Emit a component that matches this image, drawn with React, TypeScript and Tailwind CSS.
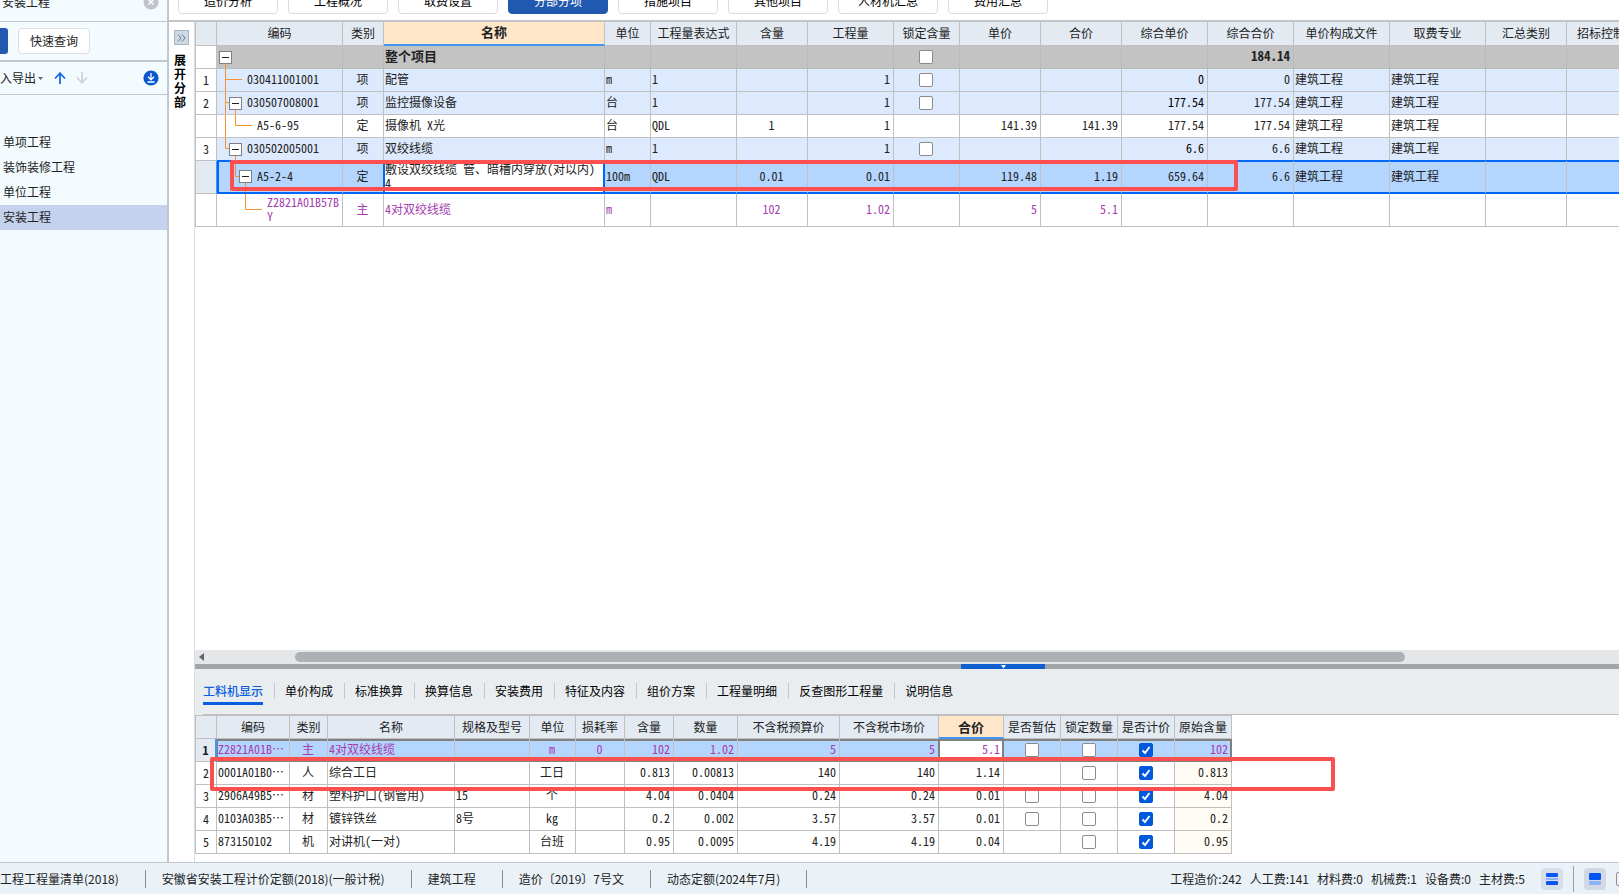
/**
 * App.tsx — Budget editor: project sidebar, bill-of-quantities grid,
 * resource breakdown panel and status bar.
 */
import { Fragment, useState } from "react";
import type { ReactNode } from "react";
import clsx from "clsx";

type Align = "left" | "center" | "right";

interface Column {
  title: string;
  width: string;
  align: Align;
}

interface BillRow {
  no: string;
  kind: "root" | "item" | "quota" | "selected" | "material";
  level: number;
  expander: boolean;
  lines: string;
  lock: boolean;
  code: string;
  cells: string[];
}

interface ResourceRow {
  cells: string[];
  estimate: boolean;
  original: string;
}

const ALIGN: Record<Align, string> = {
  left: "text-left pl-px",
  center: "text-center pr-px",
  right: "text-right pr-[3px]",
};

const INDENT = ["pl-[2px]", "pl-[12px]", "pl-[22px]", "pl-[32px]"];

const PAGE_TABS = ["造价分析", "工程概况", "取费设置", "分部分项", "措施项目", "其他项目", "人材机汇总", "费用汇总"];

const PROJECTS = ["单项工程", "装饰装修工程", "单位工程", "安装工程"];

const DETAIL_TABS = [
  "工料机显示",
  "单价构成",
  "标准换算",
  "换算信息",
  "安装费用",
  "特征及内容",
  "组价方案",
  "工程量明细",
  "反查图形工程量",
  "说明信息",
];

const BILL_COLUMNS: Column[] = [
  { title: "类别", width: "w-[41px]", align: "center" },
  { title: "名称", width: "w-[221px]", align: "left" },
  { title: "单位", width: "w-[46px]", align: "left" },
  { title: "工程量表达式", width: "w-[86px]", align: "left" },
  { title: "含量", width: "w-[71px]", align: "center" },
  { title: "工程量", width: "w-[86px]", align: "right" },
  { title: "锁定含量", width: "w-[66px]", align: "center" },
  { title: "单价", width: "w-[81px]", align: "right" },
  { title: "合价", width: "w-[81px]", align: "right" },
  { title: "综合单价", width: "w-[86px]", align: "right" },
  { title: "综合合价", width: "w-[86px]", align: "right" },
  { title: "单价构成文件", width: "w-[96px]", align: "left" },
  { title: "取费专业", width: "w-[96px]", align: "left" },
  { title: "汇总类别", width: "w-[81px]", align: "left" },
  { title: "招标控制价", width: "w-[81px]", align: "left" },
];

// "lines" is the connector drawing for the row, in cell coordinates
const BILL_ROWS: BillRow[] = [
  {
    no: "", kind: "root", level: 0, expander: true, lock: true, code: "",
    lines: "M8.5 17V23",
    cells: ["", "整个项目", "", "", "", "", "", "", "", "", "184.14", "", "", "", ""],
  },
  {
    no: "1", kind: "item", level: 1, expander: false, lock: true, code: "030411001001",
    lines: "M8.5 0V23M8.5 10.5H25",
    cells: ["项", "配管", "m", "1", "", "1", "", "", "", "0", "0", "建筑工程", "建筑工程", "", ""],
  },
  {
    no: "2", kind: "item", level: 1, expander: true, lock: true, code: "030507008001",
    lines: "M8.5 0V23M8.5 10.5H12M18.5 17V23",
    cells: ["项", "监控摄像设备", "台", "1", "", "1", "", "", "", "177.54", "177.54", "建筑工程", "建筑工程", "", ""],
  },
  {
    no: "", kind: "quota", level: 2, expander: false, lock: false, code: "A5-6-95",
    lines: "M8.5 0V23M18.5 0V10.5H35",
    cells: ["定", "摄像机 X光", "台", "QDL", "1", "1", "", "141.39", "141.39", "177.54", "177.54", "建筑工程", "建筑工程", "", ""],
  },
  {
    no: "3", kind: "item", level: 1, expander: true, lock: true, code: "030502005001",
    lines: "M8.5 0V10.5H12M18.5 17V23",
    cells: ["项", "双绞线缆", "m", "1", "", "1", "", "", "", "6.6", "6.6", "建筑工程", "建筑工程", "", ""],
  },
  {
    no: "", kind: "selected", level: 2, expander: true, lock: false, code: "A5-2-4",
    lines: "M18.5 0V15.5H22M28.5 22V33",
    cells: ["定", "敷设双绞线缆 管、暗槽内穿放(对以内) 4", "100m", "QDL", "0.01", "0.01", "", "119.48", "1.19", "659.64", "6.6", "建筑工程", "建筑工程", "", ""],
  },
  {
    no: "", kind: "material", level: 3, expander: false, lock: false, code: "Z2821A01B57BY",
    lines: "M28.5 0V15.5H45",
    cells: ["主", "4对双绞线缆", "m", "", "102", "1.02", "", "5", "5.1", "", "", "", "", "", ""],
  },
];

const RESOURCE_COLUMNS: Column[] = [
  { title: "编码", width: "w-[73px]", align: "left" },
  { title: "类别", width: "w-[38px]", align: "center" },
  { title: "名称", width: "w-[127px]", align: "left" },
  { title: "规格及型号", width: "w-[75px]", align: "left" },
  { title: "单位", width: "w-[46px]", align: "center" },
  { title: "损耗率", width: "w-[49px]", align: "center" },
  { title: "含量", width: "w-[49px]", align: "right" },
  { title: "数量", width: "w-[64px]", align: "right" },
  { title: "不含税预算价", width: "w-[102px]", align: "right" },
  { title: "不含税市场价", width: "w-[99px]", align: "right" },
  { title: "合价", width: "w-[65px]", align: "right" },
  { title: "是否暂估", width: "w-[57px]", align: "center" },
  { title: "锁定数量", width: "w-[57px]", align: "center" },
  { title: "是否计价", width: "w-[57px]", align: "center" },
  { title: "原始含量", width: "w-[57px]", align: "right" },
];

const RESOURCE_ROWS: ResourceRow[] = [
  { cells: ["Z2821A01B…", "主", "4对双绞线缆", "", "m", "0", "102", "1.02", "5", "5", "5.1"], estimate: true, original: "102" },
  { cells: ["0001A01B0…", "人", "综合工日", "", "工日", "", "0.813", "0.00813", "140", "140", "1.14"], estimate: false, original: "0.813" },
  { cells: ["2906A49B5…", "材", "塑料护口(钢管用)", "15", "个", "", "4.04", "0.0404", "0.24", "0.24", "0.01"], estimate: true, original: "4.04" },
  { cells: ["0103A03B5…", "材", "镀锌铁丝", "8号", "kg", "", "0.2", "0.002", "3.57", "3.57", "0.01"], estimate: true, original: "0.2" },
  { cells: ["873150102", "机", "对讲机(一对)", "", "台班", "", "0.95", "0.0095", "4.19", "4.19", "0.04"], estimate: false, original: "0.95" },
];

const STATUS_INFO = [
  "工程工程量清单(2018)",
  "安徽省安装工程计价定额(2018)(一般计税)",
  "建筑工程",
  "造价〔2019〕7号文",
  "动态定额(2024年7月)",
];

const STATUS_TOTALS = ["工程造价:242", "人工费:141", "材料费:0", "机械费:1", "设备费:0", "主材费:5"];

function CheckBox({ label, checked = false }: { label: string; checked?: boolean }) {
  const [on, setOn] = useState(checked);
  return (
    <span className="relative mx-auto block size-[14px]">
      <input
        type="checkbox"
        aria-label={label}
        checked={on}
        onChange={() => setOn(!on)}
        className="block size-[14px] appearance-none rounded-[2px] border border-[#8c8c8c] bg-white checked:border-[#0058dd] checked:bg-[#0058dd]"
      />
      {on && (
        <svg viewBox="0 0 14 14" className="pointer-events-none absolute inset-0 size-[14px]">
          <path d="M3.5 7.5L6 10L10.5 4" fill="none" stroke="#fff" strokeWidth="2" />
        </svg>
      )}
    </span>
  );
}

function HeadCell({ children, active = false }: { children?: ReactNode; active?: boolean }) {
  return (
    <th
      className={clsx(
        "overflow-hidden border-r border-r-[#c0c0c0] p-0",
        active
          ? "border-b-2 border-b-[#3f96f8] bg-[#ffe6c8] text-[13px] font-bold"
          : "border-b border-b-[#c0c0c0] bg-[#e3eaf2] font-normal"
      )}
    >
      {children}
    </th>
  );
}

function TreeCell({ row }: { row: BillRow }) {
  return (
    <div className={clsx("flex items-center gap-[5px]", INDENT[row.level])}>
      <svg className="absolute top-0 left-0 h-full w-12" fill="none" stroke="#f7922d">
        <path d={row.lines} />
      </svg>
      {row.expander ? (
        <button
          aria-label="折叠"
          className="relative flex size-[13px] shrink-0 items-center justify-center border border-[#808080] bg-white"
        >
          <span className="h-px w-[7px] bg-[#222]" />
        </button>
      ) : (
        <span className="w-[13px] shrink-0" />
      )}
      <span className="w-[72px] pb-[2px] text-left break-all whitespace-normal">{row.code}</span>
    </div>
  );
}

const ROW_BG: Record<BillRow["kind"], string> = {
  root: "h-[23px] bg-[#c3c3c3] border-b-[#bababa] border-r-[#bababa] border-b",
  item: "h-[23px] bg-[#dde9fd] border-b-[#c0c0c0] border-r-[#c0c0c0] border-b",
  quota: "h-[23px] bg-white border-b-[#c0c0c0] border-r-[#c0c0c0] border-b",
  selected: "h-[33px] border-b-2 border-b-[#0067f8]",
  material: "h-[33px] bg-white border-b-[#c0c0c0] border-r-[#c0c0c0] border-b text-[#a53cb0]",
};

// Frame pieces of the selected row; plain cells only carry the top edge
const SELECTED_FIRST =
  "bg-[#b3d5fe] border-r-[#c0c0c0] shadow-[0_-1px_0_#0067f8,inset_2px_1px_0_#0067f8]";
const SELECTED_EDIT =
  "bg-white border-r-[#0067f8] whitespace-normal shadow-[0_-1px_0_#0067f8,inset_1px_1px_0_#0067f8,inset_-1px_0_0_#0067f8]";
const SELECTED_PLAIN =
  "bg-[#b3d5fe] border-r-[#c0c0c0] shadow-[0_-1px_0_#0067f8,inset_0_1px_0_#0067f8]";
const SELECTED_BEFORE_EDIT =
  "bg-[#b3d5fe] border-r-[#0067f8] shadow-[0_-1px_0_#0067f8,inset_0_1px_0_#0067f8]";

function BillGrid() {
  return (
    <table className="w-0 table-fixed border-separate border-spacing-0 border-l border-[#c0c0c0] text-[12px] leading-[14px] whitespace-nowrap">
      <colgroup>
        <col className="w-[21px]" />
        <col className="w-[126px]" />
        {BILL_COLUMNS.map((c) => (
          <col key={c.title} className={c.width} />
        ))}
      </colgroup>
      <thead className="[&_th]:pb-[2px]">
        <tr className="h-[24px]">
          <HeadCell />
          <HeadCell>编码</HeadCell>
          {BILL_COLUMNS.map((c) => (
            <HeadCell key={c.title} active={c.title === "名称"}>
              {c.title}
            </HeadCell>
          ))}
        </tr>
      </thead>
      <tbody>
        {BILL_ROWS.map((row, i) => {
          const selected = row.kind === "selected";
          return (
            <tr key={i}>
              <td
                className={clsx(
                  "border-r border-b p-0 text-center",
                  selected ? "border-r-[#3f96f8] border-b-[#c0c0c0] bg-[#e3eaf2]" : "border-[#c0c0c0]"
                )}
              >
                {row.no}
              </td>
              <td className={clsx("relative border-r p-0", ROW_BG[row.kind], selected && SELECTED_FIRST)}>
                <TreeCell row={row} />
              </td>
              {BILL_COLUMNS.map((c, j) => {
                const isCheck = c.title === "锁定含量" && row.lock;
                return (
                  <td
                    key={c.title}
                    className={clsx(
                      "border-r p-0",
                      ROW_BG[row.kind],
                      ALIGN[c.align],
                      !isCheck && "pb-[2px]",
                      row.kind === "root" && "text-[13px] font-bold",
                      row.kind === "item" && c.title === "综合单价" && "text-black",
                      selected && j === 0 && SELECTED_BEFORE_EDIT,
                      selected && j === 1 && SELECTED_EDIT,
                      selected && j > 1 && SELECTED_PLAIN
                    )}
                  >
                    {isCheck ? <CheckBox label={c.title} /> : row.cells[j]}
                  </td>
                );
              })}
            </tr>
          );
        })}
      </tbody>
    </table>
  );
}

function selectedResourceCell(title: string) {
  if (title === "编码") return "bg-[#b3d5fe] border-r-[#c0c0c0] shadow-[inset_1px_2px_0_#808080]";
  if (title === "不含税市场价") return "bg-[#b3d5fe] border-r-[#808080] shadow-[inset_0_2px_0_#808080]";
  if (title === "合价")
    return "bg-white border-r-[#808080] shadow-[inset_1px_2px_0_#808080,inset_-1px_0_0_#808080]";
  if (title === "原始含量")
    return "bg-[#b3d5fe] border-r-[#808080] shadow-[inset_-1px_2px_0_#808080]";
  return "bg-[#b3d5fe] border-r-[#c0c0c0] shadow-[inset_0_2px_0_#808080]";
}

function ResourceGrid() {
  return (
    <table className="w-0 table-fixed border-separate border-spacing-0 border-t border-l border-[#c0c0c0] text-[12px] leading-[14px] whitespace-nowrap">
      <colgroup>
        <col className="w-[21px]" />
        {RESOURCE_COLUMNS.map((c) => (
          <col key={c.title} className={c.width} />
        ))}
      </colgroup>
      <thead>
        <tr className="h-[23px]">
          <HeadCell />
          {RESOURCE_COLUMNS.map((c) => (
            <HeadCell key={c.title} active={c.title === "合价"}>
              {c.title}
            </HeadCell>
          ))}
        </tr>
      </thead>
      <tbody>
        {RESOURCE_ROWS.map((row, i) => {
          const selected = i === 0;
          return (
            <tr key={i} className="h-[23px]">
              <td
                className={clsx(
                  "border-b border-b-[#c0c0c0] p-0 text-center",
                  selected
                    ? "border-r-2 border-r-[#3f96f8] bg-[#e3eaf2] font-bold"
                    : "border-r border-r-[#c0c0c0]"
                )}
              >
                {i + 1}
              </td>
              {RESOURCE_COLUMNS.map((c, j) => {
                let content: ReactNode = row.cells[j];
                if (c.title === "是否暂估") content = row.estimate && <CheckBox label={c.title} />;
                if (c.title === "锁定数量") content = <CheckBox label={c.title} />;
                if (c.title === "是否计价") content = <CheckBox label={c.title} checked />;
                if (c.title === "原始含量") content = row.original;
                return (
                  <td
                    key={c.title}
                    className={clsx(
                      "overflow-hidden border-r border-b p-0",
                      ALIGN[c.align],
                      typeof content === "string" && "pb-[2px]",
                      selected
                        ? ["border-b-[#808080] text-[#a53cb0]", selectedResourceCell(c.title)]
                        : "border-[#c0c0c0]",
                      !selected && c.title === "原始含量" && "bg-[#fffbf5]"
                    )}
                  >
                    {content}
                  </td>
                );
              })}
            </tr>
          );
        })}
      </tbody>
    </table>
  );
}

function Sidebar() {
  return (
    <aside className="w-[169px] shrink-0 border-r-2 border-[#c2c6cf] bg-[#f3fbfe]">
      <div className="flex h-[22px] justify-between overflow-hidden border-b border-[#c2c6cf] pr-2 pl-[2px]">
        <span className="-mt-[7px] leading-[18px]">安装工程</span>
        <button aria-label="关闭" className="-mt-[6px] size-4">
          <svg viewBox="0 0 16 16" className="size-4">
            <circle cx="8" cy="8" r="7.5" fill="#bfc3cc" />
            <path d="M5.5 5.5L10.5 10.5M10.5 5.5L5.5 10.5" stroke="#fff" strokeWidth="1.4" />
          </svg>
        </button>
      </div>
      <div className="flex h-[40px] items-center gap-[10px] border-b-2 border-[#c2c6cf]">
        <span className="h-[26px] w-2 rounded-r-[3px] bg-[#2159b0]" />
        <button className="h-[26px] w-[72px] rounded-[4px] border border-[#dcdfe5] bg-white">快速查询</button>
      </div>
      <div className="flex h-[33px] items-center border-b border-[#c2c6cf] pr-2">
        <button className="flex items-center gap-[2px]">
          入导出
          <svg viewBox="0 0 5 3" className="h-[3px] w-[5px]">
            <path d="M0 0H5L2.5 3Z" fill="#666" />
          </svg>
        </button>
        <button aria-label="上移" className="ml-[11px]">
          <svg viewBox="0 0 12 12" className="size-3" fill="none" stroke="#1769e8" strokeWidth="1.8">
            <path d="M6 12V1.5M1 6.5L6 1.2L11 6.5" />
          </svg>
        </button>
        <button aria-label="下移" className="ml-[10px]">
          <svg viewBox="0 0 12 12" className="size-3" fill="none" stroke="#d0d4da" strokeWidth="1.8">
            <path d="M6 0V10.5M1 5.5L6 10.8L11 5.5" />
          </svg>
        </button>
        <button aria-label="下载" className="ml-auto">
          <svg viewBox="0 0 16 16" className="size-4" fill="none" stroke="#fff" strokeWidth="1.3">
            <circle cx="8" cy="8" r="7.6" fill="#0a57d0" stroke="none" />
            <path d="M8 3V9.5M5 6.8L8 9.8L11 6.8M4.5 12H11.5" />
          </svg>
        </button>
      </div>
      <nav className="mt-[35px] flex flex-col">
        {PROJECTS.map((name) => (
          <a
            key={name}
            href="#"
            className={clsx("h-[25px] pl-[3px] leading-[24px]", name === "安装工程" && "bg-[#c5d2ee]")}
          >
            {name}
          </a>
        ))}
      </nav>
    </aside>
  );
}

function StatusBar() {
  return (
    <footer className="flex h-8 shrink-0 items-center overflow-hidden border-t border-[#c2c6cf] bg-[#eaf2f8] whitespace-nowrap text-[#222]">
      {STATUS_INFO.map((text) => (
        <Fragment key={text}>
          <span>{text}</span>
          <span className="mr-4 ml-[26px] h-[18px] w-px bg-[#8a8d92]" />
        </Fragment>
      ))}
      <div className="ml-auto flex gap-2">
        {STATUS_TOTALS.map((text) => (
          <span key={text}>{text}</span>
        ))}
      </div>
      <button aria-label="分栏" className="ml-4 flex size-[22px] items-center justify-center rounded-[4px] bg-[#d6deea]">
        <svg viewBox="0 0 12 12" className="size-3">
          <rect width="12" height="4" rx="1" fill="#0557f5" />
          <rect y="5" width="12" height="2" fill="#8fb2f5" />
          <rect y="8" width="12" height="4" rx="1" fill="#0557f5" />
        </svg>
      </button>
      <span className="mx-[10px] h-[26px] w-px bg-[#a0a0a4]" />
      <button aria-label="底部面板" className="flex size-[22px] items-center justify-center rounded-[4px] bg-[#d2d9e5]">
        <svg viewBox="0 0 12 12" className="size-3">
          <rect width="12" height="7" rx="1" fill="#0557f5" />
          <rect y="8" width="12" height="4" rx="1" fill="#8fb2f5" />
        </svg>
      </button>
      <span className="-mr-[11px] ml-[10px] size-[14px] shrink-0 rounded-[2px] border border-[#8c9199]" />
    </footer>
  );
}

export default function App() {
  const [detailTab, setDetailTab] = useState(DETAIL_TABS[0]);

  return (
    <div
      lang="zh-CN"
      className="flex h-screen flex-col overflow-hidden bg-white font-['Noto_Sans_CJK_SC',sans-serif] text-[12px] leading-[18px] text-[#222]"
    >
      <div className="flex min-h-0 flex-1">
        <Sidebar />
        <main className="flex min-w-0 flex-1 flex-col">
          {/* Page tabs */}
          <div className="flex h-[22px] shrink-0 items-end gap-[10px] overflow-hidden border-b-2 border-[#c2c6c9] pb-[6px] pl-[9px]">
            {PAGE_TABS.map((tab) => (
              <button
                key={tab}
                className={clsx(
                  "h-6 w-[100px] shrink-0 rounded-[4px] border pb-[2px]",
                  tab === "分部分项" ? "border-[#2159b0] bg-[#2159b0] text-white" : "border-[#dcdcdc] bg-white text-black"
                )}
              >
                {tab}
              </button>
            ))}
          </div>

          <div className="flex min-h-0 flex-1">
            <div className="flex w-[26px] shrink-0 flex-col gap-2 border-r border-[#dadde4] pt-2 pl-[5px] text-black">
              <button
                aria-label="展开分部"
                className="flex size-[15px] items-center justify-center border border-[#a9b5c6] bg-[#ced9e6]"
              >
                <svg viewBox="0 0 9 8" className="h-2 w-[9px]" fill="none" stroke="#68788f">
                  <path d="M1 0.5L4 4L1 7.5M5 0.5L8 4L5 7.5" />
                </svg>
              </button>
              <span className="w-3 leading-[14px] font-bold">展开分部</span>
            </div>

            <div className="flex min-w-0 flex-1 flex-col font-['Noto_Sans_Mono_CJK_SC','Noto_Sans_CJK_SC',monospace]">
              <div className="relative min-h-0 flex-1 overflow-hidden">
                <BillGrid />
                <div className="pointer-events-none absolute top-[138px] left-[35px] h-[31px] w-[1008px] rounded-[2px] border-4 border-[#fc5050]" />
              </div>

              {/* Horizontal scroll bar and splitter */}
              <div className="flex h-[14px] shrink-0 items-center bg-[#e4e6e8] pl-1">
                <svg viewBox="0 0 5 8" className="h-2 w-[5px]">
                  <path d="M5 0V8L0 4Z" fill="#60656c" />
                </svg>
                <div className="ml-[91px] h-[10px] w-[1110px] rounded-full bg-[#adb0b5]" />
              </div>
              <div className="flex h-[5px] shrink-0 bg-[#a2a5a9] pl-[766px]">
                <div className="flex w-[84px] justify-center bg-[#0f5fd0]">
                  <svg viewBox="0 0 5 5" className="size-[5px]">
                    <path d="M0 1H5L2.5 4.5Z" fill="#fff" />
                  </svg>
                </div>
              </div>

              <div className="shrink-0 bg-[#e9edf0] pl-2 font-['Noto_Sans_CJK_SC',sans-serif]">
                <div role="tablist" className="flex h-[46px] items-center border-b border-[#c0c0c0] pb-[2px] text-black">
                  {DETAIL_TABS.map((tab, i) => (
                    <Fragment key={tab}>
                      {i > 0 && <span className="mr-[10px] ml-[11px] h-4 w-px bg-[#c2c6cf]" />}
                      <button
                        role="tab"
                        aria-selected={tab === detailTab}
                        onClick={() => setDetailTab(tab)}
                        className={clsx(
                          "h-[28px] border-y-3",
                          tab === detailTab
                            ? "border-t-transparent border-b-[#0a5fe0] font-medium text-[#0a5fe0]"
                            : "border-transparent"
                        )}
                      >
                        {tab}
                      </button>
                    </Fragment>
                  ))}
                </div>
              </div>
              <div className="relative shrink-0 pb-2">
                <ResourceGrid />
                <div className="pointer-events-none absolute top-[42px] left-[15px] h-[34px] w-[1125px] rounded-[2px] border-4 border-[#fc5050]" />
              </div>
            </div>
          </div>
        </main>
      </div>
      <StatusBar />
    </div>
  );
}
